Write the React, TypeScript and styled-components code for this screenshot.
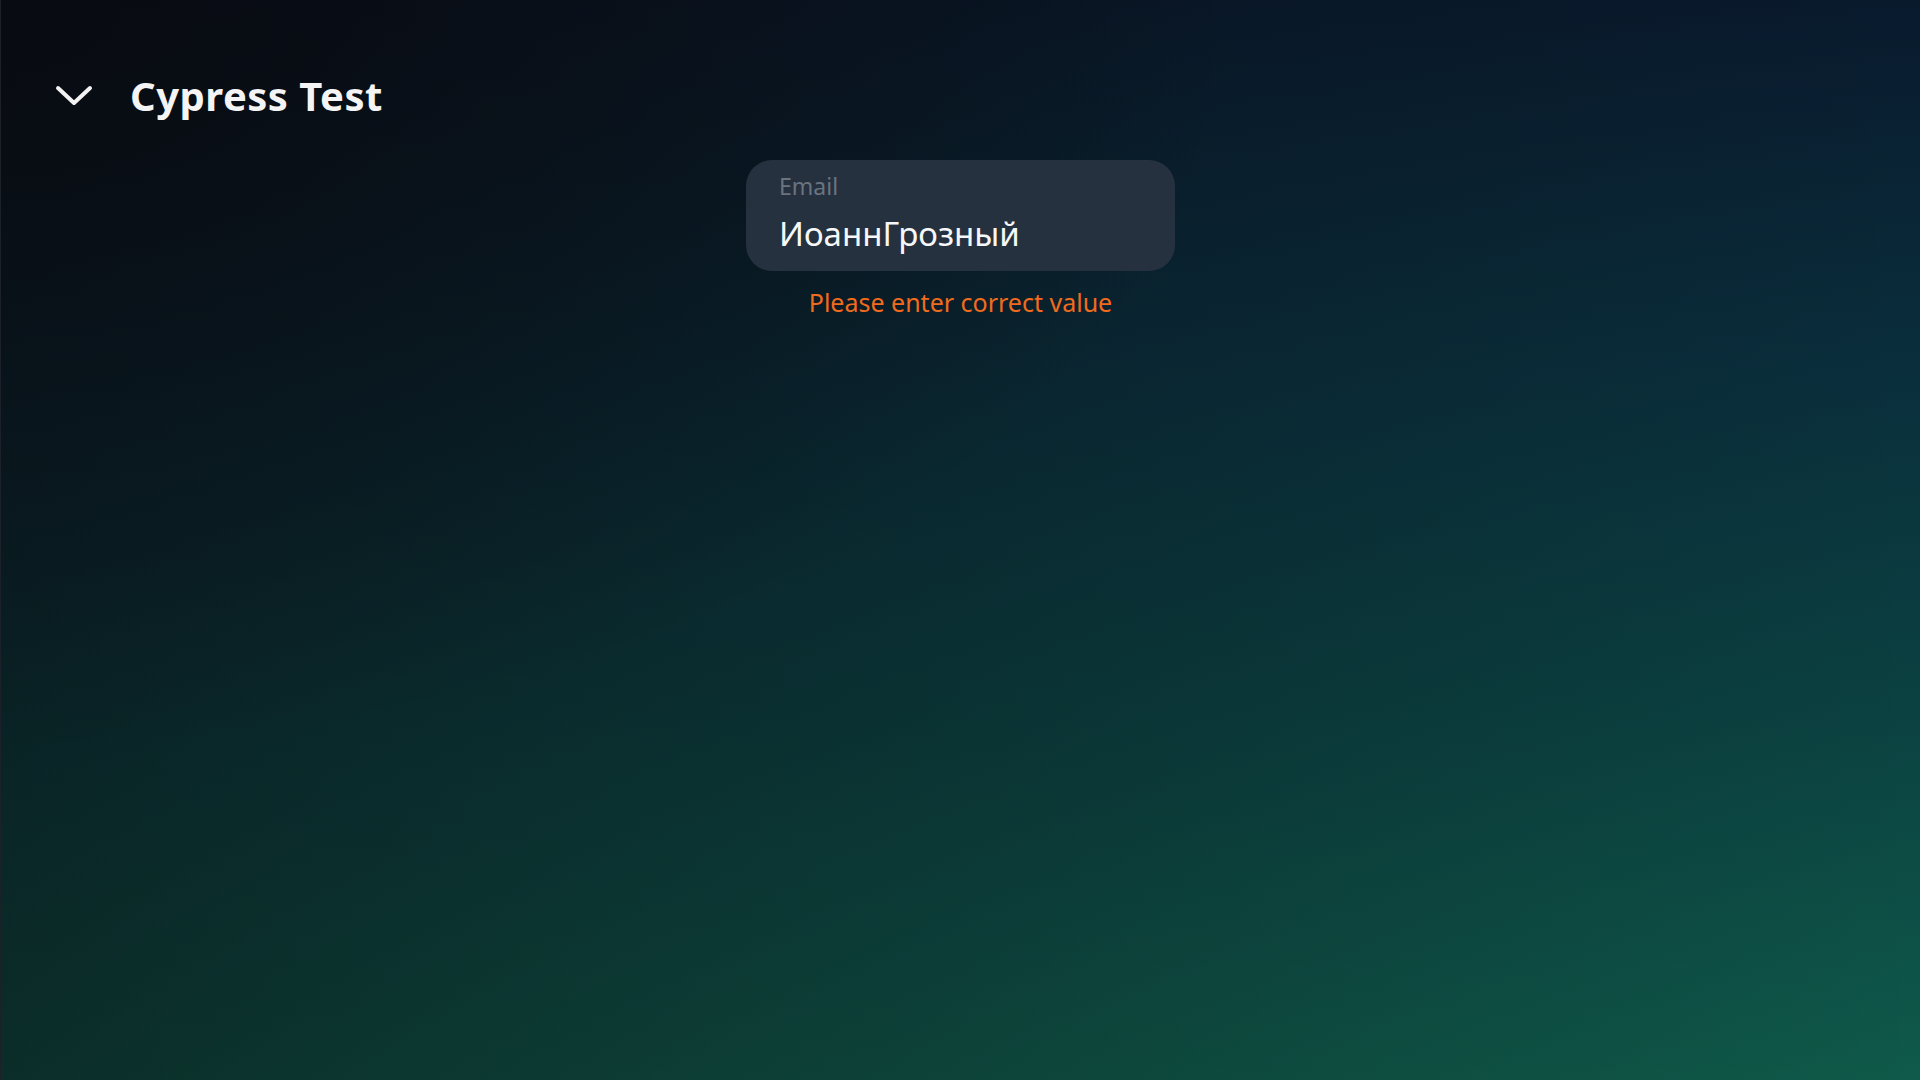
import React from "react";
import styled, { createGlobalStyle } from "styled-components";

const GlobalStyle = createGlobalStyle`
  html, body { margin: 0; padding: 0; }
  body {
    font-family: "Noto Sans", "Open Sans", sans-serif;
    background: #08090e;
  }
  * { box-sizing: border-box; }
`;

const Page = styled.div`
  width: 100%;
  height: 100vh;
  display: flex;
  flex-direction: column;
  border-left: 1px solid #1c2028;
  background:
    radial-gradient(ellipse 65% 70% at 0% 0%, rgba(8, 9, 14, 0.8) 0%, rgba(8, 9, 14, 0.4) 50%, rgba(8, 9, 14, 0) 100%),
    linear-gradient(to right, rgba(8, 9, 14, 0.55) 0%, rgba(8, 9, 14, 0.28) 50%, rgba(8, 9, 14, 0) 100%),
    linear-gradient(to bottom, #091a2d 0%, #0a2f3c 35%, #0b4141 65%, #0f5a4a 100%);
`;

const Header = styled.header`
  display: flex;
  align-items: center;
  gap: 36px;
  padding: 73px 0 0 53px;
  height: 118px;
`;

const Chevron = styled.svg`
  width: 40px;
  height: 24px;
  flex: none;
`;

const Title = styled.h1`
  margin: 0;
  font-size: 40px;
  font-weight: 700;
  color: #f4f4f5;
  line-height: 46px;
  letter-spacing: 0.5px;
`;

const FormArea = styled.div`
  display: flex;
  flex-direction: column;
  align-items: center;
  padding-top: 42px;
`;

const Field = styled.div`
  width: 429px;
  height: 111px;
  border-radius: 26px;
  background: #26313f;
  padding: 11px 32px 0 33px;
  display: flex;
  flex-direction: column;
`;

const Label = styled.span`
  font-size: 23px;
  line-height: 30px;
  color: #6a7480;
`;

const Value = styled.span`
  font-size: 33px;
  line-height: 42px;
  margin-top: 12px;
  color: #f6f7f8;
`;

const ErrorText = styled.p`
  margin: 16px 0 0;
  font-size: 25px;
  line-height: 30px;
  color: #f26b1d;
  text-align: center;
`;

export default function App() {
  return (
    <>
      <GlobalStyle />
      <Page>
        <Header>
          <Chevron viewBox="0 0 40 24" fill="none">
            <path
              d="M4 4 L20 19 L36 4"
              stroke="#f2f2f2"
              strokeWidth="4"
              strokeLinecap="round"
              strokeLinejoin="round"
            />
          </Chevron>
          <Title>Cypress Test</Title>
        </Header>
        <FormArea>
          <Field>
            <Label>Email</Label>
            <Value>ИоаннГрозный</Value>
          </Field>
          <ErrorText>Please enter correct value</ErrorText>
        </FormArea>
      </Page>
    </>
  );
}
